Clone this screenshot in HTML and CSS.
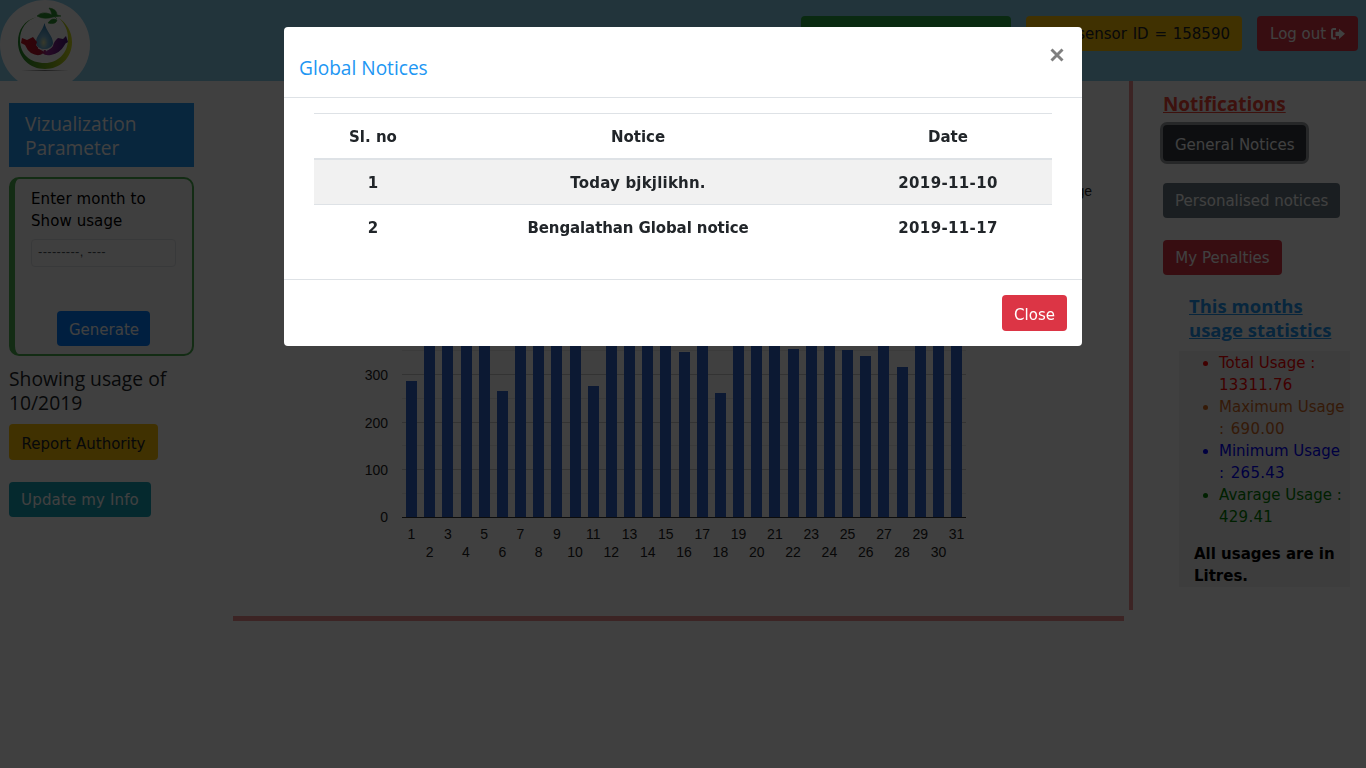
FILE: index.html
```html
<!DOCTYPE html>
<html lang="en">
<head>
<meta charset="utf-8">
<title>Water usage</title>
<link rel="stylesheet" href="styles.css">
</head>
<body>
<div class="page">
  <header class="topbar">
    <svg class="logo" width="90" height="81" viewBox="0 0 90 81">
      <defs>
        <linearGradient id="ring" x1="0" x2="1"><stop offset="0" stop-color="#1f8a2c"/><stop offset=".6" stop-color="#84b41e"/><stop offset="1" stop-color="#d5dc20"/></linearGradient>
        <radialGradient id="drop" cx=".45" cy=".75" r=".7"><stop offset="0" stop-color="#e2e6a6"/><stop offset=".35" stop-color="#79b6d6"/><stop offset="1" stop-color="#2e7db4"/></radialGradient>
        <linearGradient id="hands" x1="0" x2="1"><stop offset="0" stop-color="#c81420"/><stop offset=".4" stop-color="#b5122d"/><stop offset=".55" stop-color="#9a2a94"/><stop offset="1" stop-color="#45157a"/></linearGradient>
        <radialGradient id="shade"><stop offset="0" stop-color="#777"/><stop offset="1" stop-color="#fff"/></radialGradient>
      </defs>
      <circle cx="45" cy="45" r="45" fill="#fff"/>
      <ellipse cx="45" cy="70.5" rx="24" ry="1" fill="url(#shade)"/>
      <path d="M37 17C24 20 18 30 18 42C18 58 30 69 45 69C60 69 72 58 72 42C72 31 66 23 59 18C65 24 68 30 68 39C68 53 58 63 45 63C30 63 20 54 20 40C20 29 26 20 37 17Z" fill="url(#ring)"/>
      <path d="M44.500 23C43 31 35.500 36 36 43C37 51 52 51 53 43C53 36 46 31 44.500 23Z" fill="url(#drop)"/>
      <path d="M21 43L22 38L27 40L33 37L37 42L36 45Q39 50 44 50Q50 51 53 46Q54 41 58 38L63 39L66 36L68 42Q65 43 64 46Q60 53 51 55Q45 56 43 53.500Q38 57 31 53Q27 50 25 45Z" fill="url(#hands)"/>
      <path d="M38 48L44 51M50 48L46 51" stroke="#fff" stroke-width="1" fill="none"/>
      <path d="M37 16Q42 11 50 14L52 15Q51 10 49 8Q57 9 57 15L61 16L53 17Q44 20 37 16M48 23Q52 17 57 20Q56 25 48 23M57 19L53 15" fill="#2f9231" stroke="#2f9231" stroke-width=".6"/>
    </svg>
    <div class="topbar-actions">
      <span class="btn success account"></span>
      <span class="btn warning sensor">Your sensor ID = 158590</span>
      <a class="btn danger logout">Log out <svg width="14" height="12" viewBox="0 0 14 12"><path d="M5 1H2.500Q1 1 1 2.500V9Q1 10.500 2.500 10.500H5" fill="none" stroke="#fff" stroke-width="2"/><path d="M4.500 3.700H8V.7L14 5.800L8 10.900V7.900H4.500Z" fill="#fff"/></svg></a>
    </div>
  </header>
  <div class="columns">
    <aside class="left">
      <h4 class="param-title">Vizualization Parameter</h4>
      <form class="month-form">
        <label>Enter month to Show usage</label>
        <div class="month-input">---------, ----</div>
        <button type="button" class="btn primary">Generate</button>
      </form>
      <h4 class="showing">Showing usage of 10/2019</h4>
      <button class="btn warning report">Report Authority</button>
      <button class="btn info update">Update my Info</button>
    </aside>
    <main class="chart-area">
      <svg class="chart" id="chart" width="891" height="529" viewBox="233 81 891 529"></svg>
    </main>
    <aside class="right">
      <h4 class="note-title">Notifications</h4>
      <button class="btn dark general">General Notices</button>
      <button class="btn secondary personal">Personalised notices</button>
      <button class="btn danger penalties">My Penalties</button>
      <h4 class="stat-title">This months usage statistics</h4>
      <div class="stats">
        <ul>
          <li class="total">Total Usage : <span>13311.76</span></li>
          <li class="max">Maximum Usage <span>: 690.00</span></li>
          <li class="min">Minimum Usage <span>: 265.43</span></li>
          <li class="avg">Avarage Usage : <span>429.41</span></li>
        </ul>
        <p>All usages are in Litres.</p>
      </div>
    </aside>
  </div>
</div>
<div class="backdrop">
  <section class="modal">
    <div class="modal-header">
      <h4>Global Notices</h4>
      <svg class="x" width="14" height="14" viewBox="0 0 14 14"><path d="M1.500 1.500L12.500 12.500M12.500 1.500L1.500 12.500" stroke="#7f7f7f" stroke-width="2.900"/></svg>
    </div>
    <div class="modal-body">
      <table>
        <thead><tr><th class="c1">Sl. no</th><th class="c2">Notice</th><th class="c3">Date</th></tr></thead>
        <tbody>
          <tr class="odd"><th>1</th><th class="wide">Today bjkjlikhn.</th><th class="date">2019-11-10</th></tr>
          <tr><th>2</th><th class="tight">Bengalathan Global notice</th><th class="date">2019-11-17</th></tr>
        </tbody>
      </table>
    </div>
    <div class="modal-footer"><button class="btn danger close">Close</button></div>
  </section>
</div>
<script src="chart.js"></script>
</body>
</html>
```
FILE: styles.css
```css
* { box-sizing: border-box; }
body { margin: 0; height: 768px; overflow: hidden; background: #fff; color: #000; font: 15px/22px "DejaVu Sans", Verdana, sans-serif; }
h4, p, ul { margin: 0; }
h4 { font: 400 19.100px/24px "Open Sans", "Segoe UI", sans-serif; }
.topbar { height: 81px; background: #87ceeb; display: flex; justify-content: space-between; }
.logo { display: block; }
.topbar-actions { display: flex; gap: 15px; padding: 16px 8px 0 0; }
.btn { display: block; height: 35px; padding: 1px 12px 0; border: 0; border-radius: 4px; font: 15px/35px "DejaVu Sans", Verdana, sans-serif; color: #fff; text-align: center; white-space: nowrap; }
.success { background: #28a745; }
.warning { background: #ffc107; color: #212529; }
.danger { background: #dc3545; }
.primary { background: #007bff; }
.info { background: #17a2b8; }
.dark { background: #343a40; }
.secondary { background: #6a7a84; }
.account { width: 210px; }
.sensor { width: 216px; text-align: right; word-spacing: 1px; }
.logout { width: 101px; }
.logout svg { vertical-align: -1px; }
.columns { display: grid; grid-template-columns: 233px 896px 237px; }
.left { padding: 22px 39px 0 9px; }
.param-title { padding: 9px 16px 7px; background: #2196f3; color: #fff; }
.month-form { height: 179px; margin-top: 10px; padding: 9px 16px 0; border: 2px solid #4caf50; border-left-width: 6px; border-radius: 10px; background: #f9f9f9; }
.month-form label { display: block; width: 135px; letter-spacing: .08px; white-space: normal; }
.month-input { height: 28px; margin-top: 7px; padding-left: 6px; border: 1px solid #e0e3e6; border-radius: 4px; background: #fcfcfc; color: #495057; font: 13px/24px "Liberation Sans", Arial, sans-serif; letter-spacing: .3px; }
.month-form .btn { width: 93px; margin: 44px 0 0 26px; padding-top: 2px; }
.showing { margin-top: 11px; color: #212529; font-size: 19.300px; }
.report { width: 149px; height: 36px; margin-top: 9px; padding-top: 3px; }
.update { width: 142px; margin-top: 22px; letter-spacing: .15px; }
.chart-area { position: relative; height: 540px; }
.chart { display: block; }
.chart-area::before { content: ""; position: absolute; top: 0; right: -4px; width: 4px; height: 529px; background: #f09090; }
.chart-area::after { content: ""; position: absolute; left: 0; bottom: 0; width: 891px; height: 5px; background: #f09090; }
.chart text { font: 14px "Liberation Sans", Arial, sans-serif; fill: #222; }
.right { padding: 11px 16px 0 34px; }
.note-title { font-size: 18.900px; font-weight: 700; text-decoration: underline; color: #f44336; }
.general { width: 143px; height: 36px; margin-top: 9px; padding-top: 3px; box-shadow: 0 0 0 3px rgba(52,58,64,.5); }
.personal { width: 177px; margin-top: 22px; }
.penalties { width: 119px; margin-top: 22px; }
.stat-title { width: 150px; margin: 19px 0 0 26px; font-size: 18.500px; font-weight: 700; text-decoration: underline; color: #2196f3; }
.stats { width: 171px; height: 236px; margin: 9px 0 0 16px; padding-top: 1px; background: #f1f1f1; }
.stats ul { padding: 0 4px 0 40px; }
.stats li { height: 44px; }
.stats li span { letter-spacing: .25px; white-space: nowrap; }
.stats .max span, .stats .min span { word-spacing: 1.500px; }
.stats p { padding: 15px 0 0 15px; font-weight: 700; }
.total { color: #f00; }
.max { color: #d2691e; }
.min { color: #00f; }
.avg { color: #008000; }
.backdrop { position: fixed; inset: 0; background: rgba(0,0,0,.75); padding-top: 27px; }
.modal { width: 798px; height: 319px; margin: 0 0 0 284px; background: #fff; border-radius: 4px; color: #212529; display: flex; flex-direction: column; }
.modal-header { height: 71px; padding: 21px 18px 0 15px; border-bottom: 1px solid #dee2e6; display: flex; justify-content: space-between; }
.modal-header h4 { margin-top: 8px; color: #2196f3; }
.modal-body { height: 181px; padding: 15px 30px 0; }
table { width: 738px; border-collapse: separate; border-spacing: 0; table-layout: fixed; }
th { height: 45px; padding: 2px 0 0; text-align: center; border-top: 1px solid #dee2e6; }
thead th { height: 47px; border-bottom: 2px solid #dee2e6; }
.odd th { height: 44px; border-top: 0; background: #f1f1f1; }
.wide { letter-spacing: .2px; }
.date { letter-spacing: .35px; }
.tight { letter-spacing: -.1px; }
.c1 { width: 118px; }
.c2 { width: 412px; }
.modal-footer { height: 67px; padding: 15px 15px 0; border-top: 1px solid #dee2e6; display: flex; justify-content: flex-end; }
.close { width: 65px; height: 36px; padding-top: 3px; }
```
FILE: chart.js
```js
const svg = document.getElementById('chart');
const usage = [287, 420, 510, 470, 430, 265.43, 480, 520, 450, 500, 276, 440, 530, 470, 560, 348, 410, 263, 490, 450, 690, 354, 460, 520, 352, 340, 430, 317, 480, 510, 465];
let out = '';
for (let v = 0; v <= 500; v += 50) {
  const y = Math.floor(517 - v * 0.475);
  out += `<rect x="402" y="${y}" width="564" height="1" fill="${v % 100 ? '#ebebeb' : '#ccc'}"/>`;
  if (v % 100 === 0 && v < 400) out += `<text x="388" y="${v ? y + 5.5 : 522}" text-anchor="end">${v}</text>`;
}
usage.forEach((v, i) => {
  const x = Math.round(406 + i * 18.17);
  const top = Math.round(517.5 - v * 0.475);
  out += `<rect x="${x}" y="${top}" width="11" height="${517 - top}" fill="#3366cc"/>`;
  out += `<text x="${411.5 + i * 18.17}" y="${i % 2 ? 557 : 539}" text-anchor="middle">${i + 1}</text>`;
});
out += '<rect x="402" y="517" width="564" height="1" fill="#333"/>';
out += '<text x="1092" y="196" text-anchor="end">Usage</text>';
svg.innerHTML = out;
```
